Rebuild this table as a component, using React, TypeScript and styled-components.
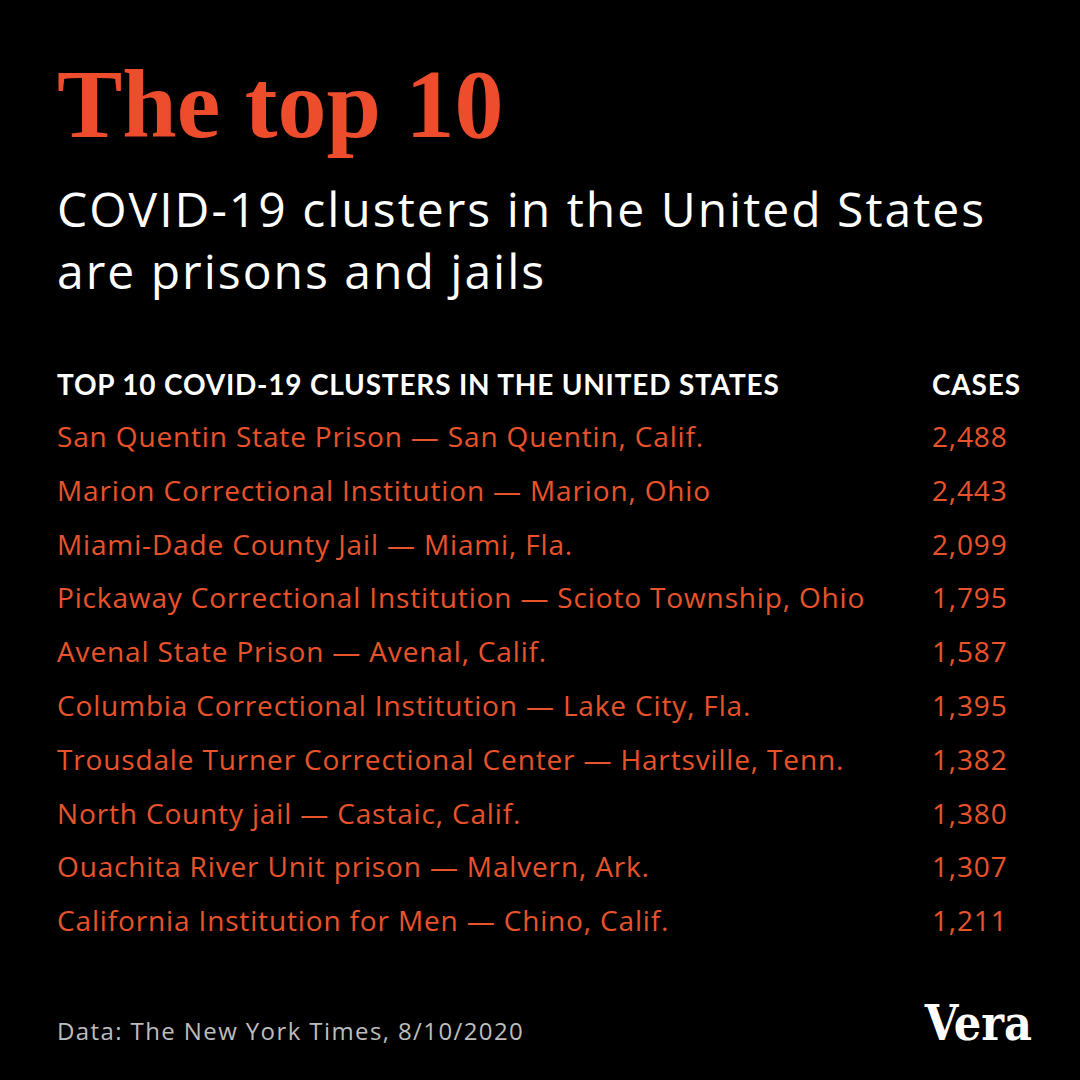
import React from "react";
import styled, { createGlobalStyle } from "styled-components";

const GlobalStyle = createGlobalStyle`
  html, body {
    margin: 0;
    padding: 0;
    background: #000;
  }
`;

type Cluster = {
  name: string
  cases: string
}

const clusters: Cluster[] = [
  { name: "San Quentin State Prison — San Quentin, Calif.", cases: "2,488" },
  { name: "Marion Correctional Institution — Marion, Ohio", cases: "2,443" },
  { name: "Miami-Dade County Jail — Miami, Fla.", cases: "2,099" },
  { name: "Pickaway Correctional Institution — Scioto Township, Ohio", cases: "1,795" },
  { name: "Avenal State Prison — Avenal, Calif.", cases: "1,587" },
  { name: "Columbia Correctional Institution — Lake City, Fla.", cases: "1,395" },
  { name: "Trousdale Turner Correctional Center — Hartsville, Tenn.", cases: "1,382" },
  { name: "North County jail — Castaic, Calif.", cases: "1,380" },
  { name: "Ouachita River Unit prison — Malvern, Ark.", cases: "1,307" },
  { name: "California Institution for Men — Chino, Calif.", cases: "1,211" },
];

const App = () => {
  return (
    <>
      <GlobalStyle />
      <Page>
        <Title>The top 10</Title>
        <Subtitle>
          COVID-19 clusters in the United States
          <br />
          are prisons and jails
        </Subtitle>
        <Table>
          <HeadCell>TOP 10 COVID-19 CLUSTERS IN THE UNITED STATES</HeadCell>
          <HeadCell>CASES</HeadCell>
          {clusters.map((c) => (
            <React.Fragment key={c.name}>
              <Cell>{c.name}</Cell>
              <Cell>{c.cases}</Cell>
            </React.Fragment>
          ))}
        </Table>
        <Footer>
          <Source>Data: The New York Times, 8/10/2020</Source>
          <Logo>Vera</Logo>
        </Footer>
      </Page>
    </>
  );
};

export default App;

const Page = styled.div`
  width: 1080px;
  height: 1080px;
  box-sizing: border-box;
  padding: 55px 48px 34px 57px;
  background: #000;
  display: flex;
  flex-direction: column;
  font-family: "Open Sans", Lato, sans-serif;
`;

const Title = styled.h1`
  margin: 0;
  font-family: "Liberation Serif", serif;
  font-weight: bold;
  font-size: 98px;
  line-height: 98px;
  letter-spacing: 0;
  color: #ee4d2d;
`;

const Subtitle = styled.div`
  margin-top: 25px;
  font-size: 48px;
  line-height: 62px;
  font-weight: 500;
  color: #fff;
  letter-spacing: 2px;
`;

const Table = styled.div`
  margin-top: 56px;
  display: grid;
  grid-template-columns: 875px 1fr;
`;

const HeadCell = styled.div`
  font-family: Lato, "Open Sans", sans-serif;
  font-size: 28px;
  line-height: 52px;
  font-weight: 700;
  color: #fff;
  letter-spacing: 0.8px;
`;

const Cell = styled.div`
  font-size: 28px;
  line-height: 53.8px;
  color: #e9532b;
  letter-spacing: 0.85px;
`;

const Footer = styled.div`
  margin-top: auto;
  display: flex;
  justify-content: space-between;
  align-items: baseline;
`;

const Source = styled.div`
  font-size: 24px;
  line-height: 30px;
  color: #bdbdbd;
  letter-spacing: 1.4px;
`;

const Logo = styled.div`
  font-family: "DejaVu Serif", serif;
  font-stretch: condensed;
  font-weight: bold;
  font-size: 48px;
  line-height: 30px;
  color: #fff;
`;
